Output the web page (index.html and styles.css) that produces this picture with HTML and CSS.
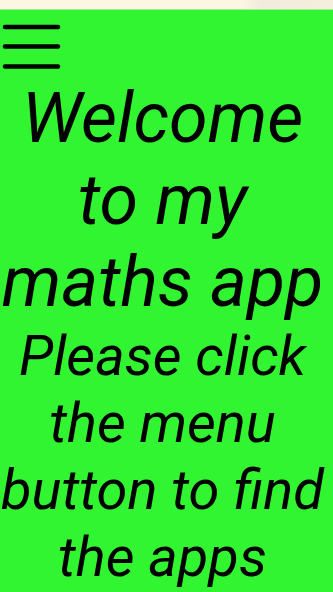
FILE: index.html
```html
<!DOCTYPE html>
<html lang="en">
<head>
    <meta charset="UTF-8">
    <meta name="viewport" content="width=device-width, initial-scale=1.0">
    <title>Maths App</title>
    <link rel="stylesheet" href="styles.css">
</head>
<body>
    <div class="topbar"></div>
    <div class="page">
        <button class="menu-button" aria-label="Menu">
            <svg width="62" height="62" viewBox="0 0 62 62">
                <g stroke="#000" stroke-width="4.5" stroke-linecap="round">
                    <line x1="5" y1="14" x2="58" y2="14" />
                    <line x1="5" y1="33.5" x2="58" y2="33.5" />
                    <line x1="5" y1="53.5" x2="58" y2="53.5" />
                </g>
            </svg>
        </button>
        <h1 class="title">Welcome to my maths app</h1>
        <p class="intro">Please click the menu button to find the apps</p>
    </div>
</body>
</html>
```

FILE: styles.css
```css
html, body {
    margin: 0;
    padding: 0;
    background-color: #31f531;
}
body {
    font-family: Roboto, "Liberation Sans", sans-serif;
    color: #000;
    height: 592px;
    overflow: hidden;
}
.topbar {
    height: 10px;
    background: linear-gradient(to right, #fdf6e3 0%, #fdf6e3 72%, #f2ecdc 78%, #f5eedd 100%);
    border-bottom: 1px solid #a8e8a0;
    box-sizing: border-box;
}
.page {
    background-color: #31f531;
    padding-right: 8px;
}
.menu-button {
    display: block;
    background: none;
    border: none;
    padding: 0;
    margin: 0;
    height: 67px;
    cursor: pointer;
}
.menu-button svg {
    display: block;
}
.title {
    font-size: 70px;
    font-style: italic;
    font-weight: normal;
    line-height: normal;
    text-align: center;
    margin: 0;
}
.intro {
    font-size: 56px;
    font-style: italic;
    line-height: 67px;
    text-align: center;
    margin: 0;
}
```
